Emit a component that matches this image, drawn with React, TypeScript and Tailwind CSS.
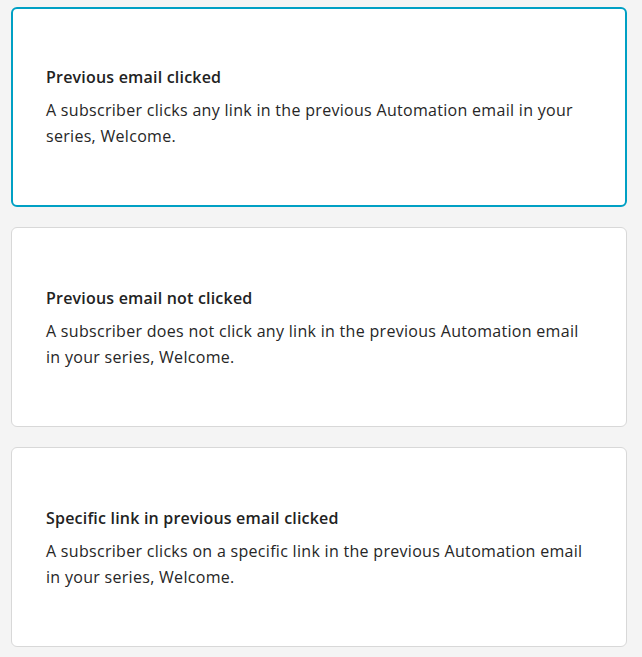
const options = [
  {
    title: 'Previous email clicked',
    body: 'A subscriber clicks any link in the previous Automation email in your series, Welcome.',
    selected: true,
  },
  {
    title: 'Previous email not clicked',
    body: 'A subscriber does not click any link in the previous Automation email in your series, Welcome.',
    selected: false,
  },
  {
    title: 'Specific link in previous email clicked',
    body: 'A subscriber clicks on a specific link in the previous Automation email in your series, Welcome.',
    selected: false,
  },
];

export default function App() {
  return (
    <div
      className="flex h-[657px] w-[642px] flex-col gap-[20px] overflow-hidden bg-[#f4f4f4] pt-[7px] pl-[11px] pr-[15px]"
      style={{ fontFamily: '"Open Sans", "Noto Sans", sans-serif' }}
    >
      {options.map((o) => (
        <div
          key={o.title}
          className={
            o.selected
              ? 'h-[200px] shrink-0 cursor-pointer rounded-[6px] border-2 border-[#00a0c4] bg-white px-[33px] pt-[57px]'
              : 'h-[200px] shrink-0 cursor-pointer rounded-[6px] border border-[#d8d8d8] bg-white px-[34px] pt-[59px]'
          }
        >
          <h3 className="text-[16px] leading-[22px] font-semibold tracking-[0.2px] text-[#222222]">{o.title}</h3>
          <p className="mt-[9px] text-[16px] leading-[26px] tracking-[0.3px] text-[#262626]">{o.body}</p>
        </div>
      ))}
    </div>
  );
}
